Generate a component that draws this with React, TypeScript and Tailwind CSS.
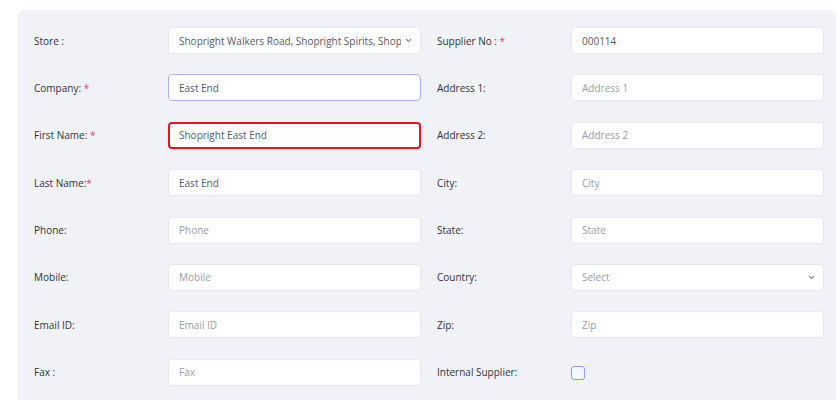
import React from "react";

type Field = {
  label: string;
  req?: "space" | "tight";
  value?: string;
  placeholder?: string;
  kind?: "select" | "checkbox";
  state?: "focus" | "error";
};

const left: Field[] = [
  { label: "Store :", value: "Shopright Walkers Road, Shopright Spirits, Shopright Express", kind: "select" },
  { label: "Company:", req: "space", value: "East End", state: "focus" },
  { label: "First Name:", req: "space", value: "Shopright East End", state: "error" },
  { label: "Last Name:", req: "tight", value: "East End" },
  { label: "Phone:", placeholder: "Phone" },
  { label: "Mobile:", placeholder: "Mobile" },
  { label: "Email ID:", placeholder: "Email ID" },
  { label: "Fax :", placeholder: "Fax" },
];

const right: Field[] = [
  { label: "Supplier No :", req: "space", value: "000114" },
  { label: "Address 1:", placeholder: "Address 1" },
  { label: "Address 2:", placeholder: "Address 2" },
  { label: "City:", placeholder: "City" },
  { label: "State:", placeholder: "State" },
  { label: "Country:", placeholder: "Select", kind: "select" },
  { label: "Zip:", placeholder: "Zip" },
  { label: "Internal Supplier:", kind: "checkbox" },
];

function Chevron() {
  return (
    <svg width="7" height="5" viewBox="0 0 7 5" className="shrink-0">
      <path d="M1 1.2 L3.5 3.6 L6 1.2" fill="none" stroke="#777" strokeWidth="1.1" />
    </svg>
  );
}

function Control({ f }: { f: Field }) {
  if (f.kind === "checkbox") {
    return (
      <div className="h-[27px] flex items-center pt-[2px]">
        <div className="w-[14px] h-[14px] rounded-[3px] border border-[#8b9cf7] bg-[#f7f8fd]" />
      </div>
    );
  }
  const border =
    f.state === "focus"
      ? "border border-[#a8b4f4]"
      : f.state === "error"
      ? "border-2 border-[#e8131c]"
      : "border border-[#e6e8ef]";
  const pad = f.state === "error" ? "pl-[9px]" : "pl-[10px]";
  return (
    <div className={`h-[27px] w-[253px] bg-white rounded-[4px] ${border} ${pad} pr-[8px] flex items-center gap-1 overflow-hidden`}>
      <span
        className={`flex-1 whitespace-nowrap overflow-hidden text-[10px] pt-[1px] ${
          f.value ? "text-[#555b66]" : "text-[#9a9ea6]"
        }`}
      >
        {f.value ?? f.placeholder}
      </span>
      {f.kind === "select" && <Chevron />}
    </div>
  );
}

function Row({ f }: { f: Field }) {
  return (
    <div className="flex items-center h-[27px]">
      <div className="w-[134px] text-[10px] pt-[1px] text-[#2f3237] whitespace-nowrap">
        {f.label}
        {f.req === "space" && <span className="text-[#e8405a]"> *</span>}
        {f.req === "tight" && <span className="text-[#e8405a]">*</span>}
      </div>
      <Control f={f} />
    </div>
  );
}

export default function App() {
  return (
    <div
      className="w-[840px] h-[400px] bg-white overflow-hidden pt-[10px] pl-[18px] pr-[4px]"
      style={{ fontFamily: '"Open Sans", "Liberation Sans", sans-serif' }}
    >
      <div className="bg-[#f1f2f7] rounded-t-[6px] h-[420px] pt-[17px] pl-[16px] flex gap-[16px]">
        <div className="flex flex-col gap-y-[20.4px]">
          {left.map((f) => (
            <Row key={f.label} f={f} />
          ))}
        </div>
        <div className="flex flex-col gap-y-[20.4px]">
          {right.map((f) => (
            <Row key={f.label} f={f} />
          ))}
        </div>
      </div>
    </div>
  );
}
